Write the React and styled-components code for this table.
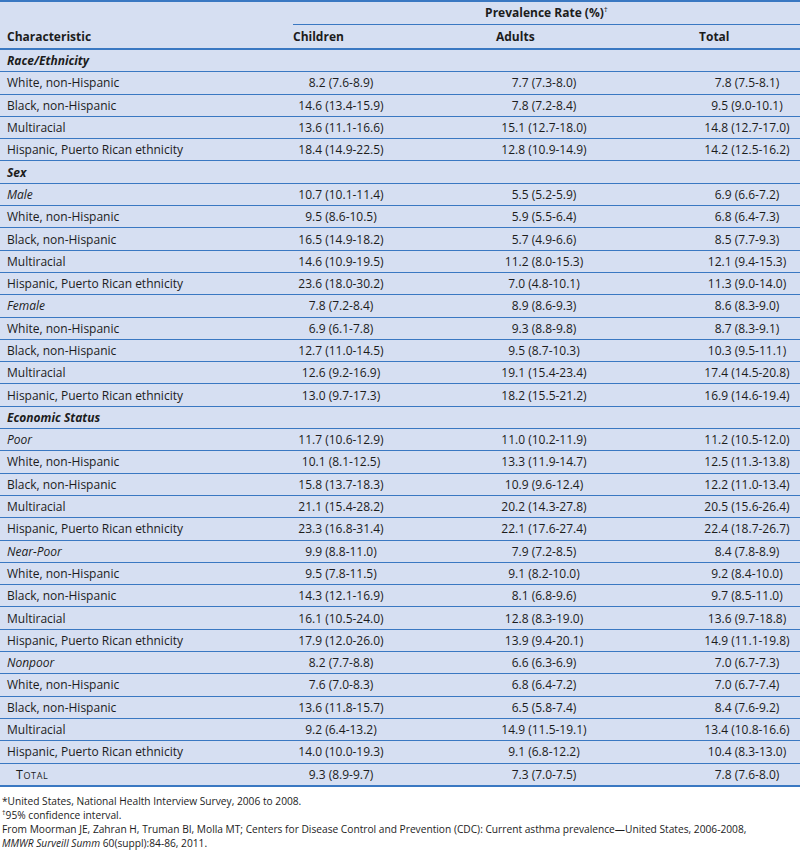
import React from "react";
import styled, { createGlobalStyle } from "styled-components";

const Global = createGlobalStyle`
  html, body { margin: 0; padding: 0; background: #ffffff; }
  body { font-family: "Open Sans", "Noto Sans", sans-serif; color: #1c1c1c; }
`;

const LINE = "#3a78c2";
const BG = "#d6dff2";

const Page = styled.div`
  width: 800px;
`;

const Table = styled.table`
  width: 800px;
  border-collapse: collapse;
  table-layout: fixed;
  background: ${BG};
  border-top: 2px solid ${LINE};
  border-bottom: 2px solid ${LINE};
  font-size: 12px;
`;

const Col = styled.col`
  width: ${(p) => p.$w}px;
`;

const HeadRow = styled.tr`
  border-bottom: ${(p) => (p.$last ? `2px solid ${LINE}` : "none")};
`;

const Th = styled.th`
  font-weight: 700;
  text-align: left;
  padding: 0 0 0 ${(p) => p.$pad ?? 2}px;
  height: ${(p) => p.$h}px;
  vertical-align: middle;
`;

const SpanHead = styled.div`
  margin-left: 2px;
  height: 22px;
  line-height: 22px;
  border-bottom: 1px solid ${LINE};
  text-align: center;
`;

const Sup = styled.sup`
  font-size: 8px;
  vertical-align: top;
  position: relative;
  top: -4px;
  font-weight: 400;
`;

const Row = styled.tr`
  border-bottom: ${(p) => (p.$last ? "none" : `1px solid ${LINE}`)};
`;

const Td = styled.td`
  height: 21.3px;
  padding: 0 0 0 ${(p) => p.$pad ?? 2}px;
  vertical-align: middle;
  white-space: nowrap;
  font-style: ${(p) => (p.$italic ? "italic" : "normal")};
  font-weight: ${(p) => (p.$bold ? 700 : 400)};
`;

const Value = styled.span`
  display: inline-block;
  width: 96px;
  text-align: center;
`;

const SmallCaps = styled.span`
  font-variant: small-caps;
  font-size: 12.5px;
  letter-spacing: 0.6px;
`;

const Notes = styled.div`
  padding: 7px 0 0 2px;
  font-size: 10.2px;
  line-height: 14px;
`;

const NoteLine = styled.div`
  white-space: nowrap;
`;

const Dag = styled.sup`
  font-size: 7px;
  vertical-align: top;
  position: relative;
  top: -2px;
`;

const groups = [
  { label: "Race/Ethnicity", type: "cat" },
  { label: "White, non-Hispanic", v: ["8.2 (7.6-8.9)", "7.7 (7.3-8.0)", "7.8 (7.5-8.1)"] },
  { label: "Black, non-Hispanic", v: ["14.6 (13.4-15.9)", "7.8 (7.2-8.4)", "9.5 (9.0-10.1)"] },
  { label: "Multiracial", v: ["13.6 (11.1-16.6)", "15.1 (12.7-18.0)", "14.8 (12.7-17.0)"] },
  { label: "Hispanic, Puerto Rican ethnicity", v: ["18.4 (14.9-22.5)", "12.8 (10.9-14.9)", "14.2 (12.5-16.2)"] },
  { label: "Sex", type: "cat" },
  { label: "Male", type: "sub", v: ["10.7 (10.1-11.4)", "5.5 (5.2-5.9)", "6.9 (6.6-7.2)"] },
  { label: "White, non-Hispanic", v: ["9.5 (8.6-10.5)", "5.9 (5.5-6.4)", "6.8 (6.4-7.3)"] },
  { label: "Black, non-Hispanic", v: ["16.5 (14.9-18.2)", "5.7 (4.9-6.6)", "8.5 (7.7-9.3)"] },
  { label: "Multiracial", v: ["14.6 (10.9-19.5)", "11.2 (8.0-15.3)", "12.1 (9.4-15.3)"] },
  { label: "Hispanic, Puerto Rican ethnicity", v: ["23.6 (18.0-30.2)", "7.0 (4.8-10.1)", "11.3 (9.0-14.0)"] },
  { label: "Female", type: "sub", v: ["7.8 (7.2-8.4)", "8.9 (8.6-9.3)", "8.6 (8.3-9.0)"] },
  { label: "White, non-Hispanic", v: ["6.9 (6.1-7.8)", "9.3 (8.8-9.8)", "8.7 (8.3-9.1)"] },
  { label: "Black, non-Hispanic", v: ["12.7 (11.0-14.5)", "9.5 (8.7-10.3)", "10.3 (9.5-11.1)"] },
  { label: "Multiracial", v: ["12.6 (9.2-16.9)", "19.1 (15.4-23.4)", "17.4 (14.5-20.8)"] },
  { label: "Hispanic, Puerto Rican ethnicity", v: ["13.0 (9.7-17.3)", "18.2 (15.5-21.2)", "16.9 (14.6-19.4)"] },
  { label: "Economic Status", type: "cat" },
  { label: "Poor", type: "sub", v: ["11.7 (10.6-12.9)", "11.0 (10.2-11.9)", "11.2 (10.5-12.0)"] },
  { label: "White, non-Hispanic", v: ["10.1 (8.1-12.5)", "13.3 (11.9-14.7)", "12.5 (11.3-13.8)"] },
  { label: "Black, non-Hispanic", v: ["15.8 (13.7-18.3)", "10.9 (9.6-12.4)", "12.2 (11.0-13.4)"] },
  { label: "Multiracial", v: ["21.1 (15.4-28.2)", "20.2 (14.3-27.8)", "20.5 (15.6-26.4)"] },
  { label: "Hispanic, Puerto Rican ethnicity", v: ["23.3 (16.8-31.4)", "22.1 (17.6-27.4)", "22.4 (18.7-26.7)"] },
  { label: "Near-Poor", type: "sub", v: ["9.9 (8.8-11.0)", "7.9 (7.2-8.5)", "8.4 (7.8-8.9)"] },
  { label: "White, non-Hispanic", v: ["9.5 (7.8-11.5)", "9.1 (8.2-10.0)", "9.2 (8.4-10.0)"] },
  { label: "Black, non-Hispanic", v: ["14.3 (12.1-16.9)", "8.1 (6.8-9.6)", "9.7 (8.5-11.0)"] },
  { label: "Multiracial", v: ["16.1 (10.5-24.0)", "12.8 (8.3-19.0)", "13.6 (9.7-18.8)"] },
  { label: "Hispanic, Puerto Rican ethnicity", v: ["17.9 (12.0-26.0)", "13.9 (9.4-20.1)", "14.9 (11.1-19.8)"] },
  { label: "Nonpoor", type: "sub", v: ["8.2 (7.7-8.8)", "6.6 (6.3-6.9)", "7.0 (6.7-7.3)"] },
  { label: "White, non-Hispanic", v: ["7.6 (7.0-8.3)", "6.8 (6.4-7.2)", "7.0 (6.7-7.4)"] },
  { label: "Black, non-Hispanic", v: ["13.6 (11.8-15.7)", "6.5 (5.8-7.4)", "8.4 (7.6-9.2)"] },
  { label: "Multiracial", v: ["9.2 (6.4-13.2)", "14.9 (11.5-19.1)", "13.4 (10.8-16.6)"] },
  { label: "Hispanic, Puerto Rican ethnicity", v: ["14.0 (10.0-19.3)", "9.1 (6.8-12.2)", "10.4 (8.3-13.0)"] },
  { label: "Total", type: "total", v: ["9.3 (8.9-9.7)", "7.3 (7.0-7.5)", "7.8 (7.6-8.0)"] },
];

export default function App() {
  return (
    <Page>
      <Global />
      <Table>
        <colgroup>
          <Col $w={291} />
          <Col $w={203} />
          <Col $w={203} />
          <Col $w={103} />
        </colgroup>
        <thead>
          <HeadRow>
            <Th $h={23} />
            <Th colSpan={3} $pad={0}>
              <SpanHead>
                Prevalence Rate (%)<Sup>†</Sup>
              </SpanHead>
            </Th>
          </HeadRow>
          <HeadRow $last>
            <Th $h={23} $pad={7}>Characteristic</Th>
            <Th>Children</Th>
            <Th>Adults</Th>
            <Th>Total</Th>
          </HeadRow>
        </thead>
        <tbody>
          {groups.map((r, i) => {
            const last = i === groups.length - 1;
            if (r.type === "cat") {
              return (
                <Row key={i} $last={last}>
                  <Td $pad={7} $bold $italic colSpan={4}>
                    {r.label}
                  </Td>
                </Row>
              );
            }
            return (
              <Row key={i} $last={last}>
                {r.type === "total" ? (
                  <Td $pad={16}>
                    <SmallCaps>{r.label}</SmallCaps>
                  </Td>
                ) : (
                  <Td $pad={7} $italic={r.type === "sub"}>
                    {r.label}
                  </Td>
                )}
                {r.v.map((v, j) => (
                  <Td key={j}>
                    <Value>{v}</Value>
                  </Td>
                ))}
              </Row>
            );
          })}
        </tbody>
      </Table>
      <Notes>
        <NoteLine>*United States, National Health Interview Survey, 2006 to 2008.</NoteLine>
        <NoteLine>
          <Dag>†</Dag>95% confidence interval.
        </NoteLine>
        <NoteLine>
          From Moorman JE, Zahran H, Truman BI, Molla MT; Centers for Disease Control and Prevention (CDC): Current asthma prevalence—United States, 2006-2008,
        </NoteLine>
        <NoteLine>
          <i>MMWR Surveill Summ</i> 60(suppl):84-86, 2011.
        </NoteLine>
      </Notes>
    </Page>
  );
}
